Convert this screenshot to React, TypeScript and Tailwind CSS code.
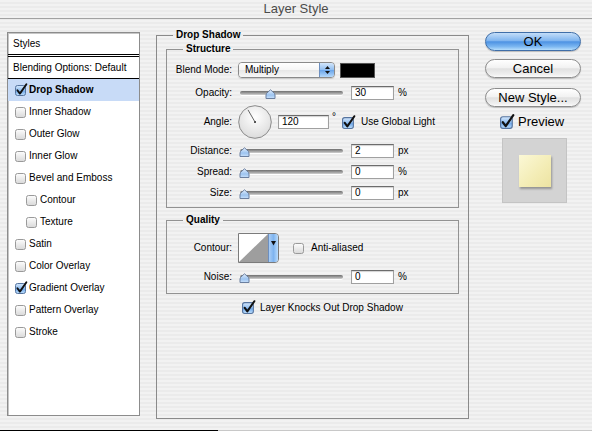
import { useId } from 'react';
import type { ReactNode } from 'react';

const pinstripe =
    'bg-[repeating-linear-gradient(to_bottom,#f2f2f2_0px,#f2f2f2_2px,#ebebeb_2px,#ebebeb_4px)]';

type StyleItem = {
    label: string;
    checked?: boolean;
    active?: boolean;
    nested?: boolean;
};

const styleItems: StyleItem[] = [
    { label: 'Drop Shadow', checked: true, active: true },
    { label: 'Inner Shadow' },
    { label: 'Outer Glow' },
    { label: 'Inner Glow' },
    { label: 'Bevel and Emboss' },
    { label: 'Contour', nested: true },
    { label: 'Texture', nested: true },
    { label: 'Satin' },
    { label: 'Color Overlay' },
    { label: 'Gradient Overlay', checked: true },
    { label: 'Pattern Overlay' },
    { label: 'Stroke' },
];

function useSvgId(suffix: string) {
    return useId().replace(/[^a-zA-Z0-9]/g, '') + suffix;
}

function AquaCheck({
    checked = false,
    size = 11,
}: {
    checked?: boolean;
    size?: number;
}) {
    const fillId = useSvgId('fill');
    return (
        <svg
            width={size + 1}
            height={size + 1}
            viewBox="0 0 12 12"
            className="shrink-0 overflow-visible"
        >
            <defs>
                <linearGradient id={fillId} x1="0" y1="0" x2="0" y2="1">
                    {checked ? (
                        <>
                            <stop offset="0" stopColor="#d6e8fc" />
                            <stop offset="0.5" stopColor="#8fbdf0" />
                            <stop offset="0.55" stopColor="#6fa8ea" />
                            <stop offset="1" stopColor="#bfe0fd" />
                        </>
                    ) : (
                        <>
                            <stop offset="0" stopColor="#fdfdfd" />
                            <stop offset="1" stopColor="#d9d9d9" />
                        </>
                    )}
                </linearGradient>
            </defs>
            <rect
                x="0.5"
                y="1.5"
                width="10"
                height="10"
                rx="2"
                fill={`url(#${fillId})`}
                stroke={checked ? '#56749f' : '#9a9a9a'}
            />
            {checked && (
                <path
                    d="M2.4 6.2 L4.9 9.6 L11.4 0.2"
                    fill="none"
                    stroke="#111"
                    strokeWidth="1.9"
                    strokeLinecap="round"
                    strokeLinejoin="round"
                />
            )}
        </svg>
    );
}

function StylesList() {
    return (
        <div className="mt-[13px] ml-[7px] h-[384px] w-[133px] shrink-0 border border-[#8c8c8c] bg-white shadow-[inset_1px_1px_0_#c6c6c6]">
            <div className="flex h-[21px] items-center pl-[5px]">Styles</div>
            <div className="h-[3px] border-y border-black" />
            <div className="flex h-[22px] items-center border-b border-black pl-[5px]">
                Blending Options: Default
            </div>
            {styleItems.map((item) => (
                <div
                    key={item.label}
                    className={`flex h-[22px] items-center gap-[2px] ${item.nested ? 'pl-[18px]' : 'pl-[7px]'} ${item.active ? 'bg-[#c8dbf7] font-bold' : ''}`}
                >
                    <AquaCheck checked={item.checked} />
                    <span>{item.label}</span>
                </div>
            ))}
        </div>
    );
}

function Label({ children }: { children: ReactNode }) {
    return (
        <span className="w-[66px] shrink-0 pr-[1px] text-right">{children}</span>
    );
}

function NumField({ value, className = 'w-[43px]' }: { value: string; className?: string }) {
    return (
        <div
            className={`flex h-[14px] items-center border border-[#a0a0a0] border-t-[#6c6c6c] bg-white pl-[3px] shadow-[inset_0_1px_1px_rgba(0,0,0,0.18)] ${className}`}
        >
            {value}
        </div>
    );
}

function SliderKnob() {
    const id = useSvgId('knob');
    return (
        <svg width="11" height="10" viewBox="0 0 11 10">
            <defs>
                <linearGradient id={id} x1="0" y1="0" x2="0" y2="1">
                    <stop offset="0" stopColor="#e4effc" />
                    <stop offset="0.6" stopColor="#9cc3ef" />
                    <stop offset="1" stopColor="#c9e1fb" />
                </linearGradient>
            </defs>
            <path
                d="M1 9.5 V6 Q1 4.5 3 3 L5.5 0.8 L8 3 Q10 4.5 10 6 V9.5 Z"
                fill={`url(#${id})`}
                stroke="#6b7f9f"
            />
        </svg>
    );
}

// position is 0..100 along the groove, independent of the field's unit
function Slider({ position }: { position: number }) {
    const knobCenter = 4 + (position / 100) * 88;
    return (
        <div className="relative flex h-[14px] w-[105px] shrink-0 items-center pl-[2px]">
            <div className="h-[4px] w-full rounded-full bg-[linear-gradient(to_bottom,#6f6f6f,#a5a5a5_60%,#d2d2d2)] shadow-[0_1px_0_#ffffff]" />
            <div
                className="absolute top-[3px] h-[10px] w-[11px]"
                style={{ left: 2 + knobCenter - 5.5 }}
            >
                <SliderKnob />
            </div>
        </div>
    );
}

function SliderRow({
    label,
    value,
    position,
    unit,
    className,
}: {
    label: string;
    value: number;
    position: number;
    unit: string;
    className: string;
}) {
    return (
        <div className={`flex h-[14px] items-center ${className}`}>
            <Label>{label}</Label>
            <div className="ml-[5px]">
                <Slider position={position} />
            </div>
            <div className="ml-[8px]">
                <NumField value={String(value)} />
            </div>
            <span className="ml-[4px]">{unit}</span>
        </div>
    );
}

function PopupMenu({ value }: { value: string }) {
    return (
        <div className="flex h-[16px] w-[97px] overflow-hidden rounded-[4px] border border-[#8a8a8a] shadow-[0_1px_1px_rgba(0,0,0,0.15)]">
            <div className="flex flex-1 items-center bg-[linear-gradient(to_bottom,#ffffff,#f5f5f5_50%,#e7e7e7_52%,#f7f7f7)] pl-[6px]">
                {value}
            </div>
            <div className="flex w-[15px] flex-col items-center justify-center gap-[2px] border-l border-[#6d8fbf] bg-[linear-gradient(to_bottom,#d3e6fb,#8fbdf0_50%,#6aa5ea_52%,#b6d9fb)]">
                <svg width="5" height="3" viewBox="0 0 5 3">
                    <path d="M0 3 L2.5 0 L5 3 Z" fill="#111" />
                </svg>
                <svg width="5" height="3" viewBox="0 0 5 3">
                    <path d="M0 0 L2.5 3 L5 0 Z" fill="#111" />
                </svg>
            </div>
        </div>
    );
}

function AngleDial({ angle }: { angle: number }) {
    const id = useSvgId('dial');
    const rad = (angle * Math.PI) / 180;
    const c = 17;
    const len = 14;
    return (
        <svg width="34" height="34" viewBox="0 0 34 34" className="shrink-0">
            <defs>
                <radialGradient id={id} cx="0.5" cy="0.35" r="0.7">
                    <stop offset="0" stopColor="#ffffff" />
                    <stop offset="1" stopColor="#d9d9d9" />
                </radialGradient>
            </defs>
            <circle cx={c} cy={c} r="16.3" fill={`url(#${id})`} stroke="#8a8a8a" />
            <line
                x1={c}
                y1={c}
                x2={c + Math.cos(rad) * len}
                y2={c - Math.sin(rad) * len}
                stroke="#555"
                strokeWidth="0.9"
            />
            <rect x={c - 1} y={c - 1} width="2" height="2" fill="#555" />
        </svg>
    );
}

function ContourSwatch() {
    return (
        <div className="flex h-[30px] w-[41px] overflow-hidden rounded-r-[4px] border border-[#7b7b7b]">
            <svg width="29" height="28" viewBox="0 0 29 28" className="shrink-0">
                <rect width="29" height="28" fill="#ffffff" />
                <path d="M0 28 L29 0 L29 28 Z" fill="#9e9e9e" />
            </svg>
            <div className="flex flex-1 justify-center border-l border-[#6d8fbf] bg-[linear-gradient(to_right,#a9cdf6,#7fb4ef_50%,#b9dbfc)] pt-[7px]">
                <svg width="5" height="5" viewBox="0 0 5 5">
                    <path d="M0 0 L5 0 L2.5 4.5 Z" fill="#111" />
                </svg>
            </div>
        </div>
    );
}

function DropShadowPanel() {
    return (
        <fieldset className="mt-[10px] ml-[16px] h-[390px] w-[313px] shrink-0 border border-[#8a8a8a]">
            <legend className="ml-[16px] px-[3px] leading-[12px] font-bold">
                Drop Shadow
            </legend>

            <fieldset className="mt-[2px] ml-[9px] h-[165px] w-[293px] border border-[#929292]">
                <legend className="ml-[16px] px-[3px] leading-[12px] font-bold">
                    Structure
                </legend>

                <div className="mt-[7px] flex h-[16px] items-center">
                    <Label>Blend Mode:</Label>
                    <div className="ml-[5px]">
                        <PopupMenu value="Multiply" />
                    </div>
                    <div className="ml-[5px] h-[15px] w-[35px] border border-[#555] bg-black" />
                </div>

                <SliderRow label="Opacity:" value={30} position={30} unit="%" className="mt-[8px]" />

                <div className="mt-[5px] flex h-[34px] items-center">
                    <Label>Angle:</Label>
                    <div className="ml-[5px]">
                        <AngleDial angle={120} />
                    </div>
                    <NumField value="120" className="ml-[6px] w-[51px]" />
                    <span className="mb-[10px] ml-[3px]">°</span>
                    <div className="ml-[6px]">
                        <AquaCheck checked size={12} />
                    </div>
                    <span className="ml-[6px]">Use Global Light</span>
                </div>

                <SliderRow label="Distance:" value={2} position={0} unit="px" className="mt-[5px]" />
                <SliderRow label="Spread:" value={0} position={0} unit="%" className="mt-[7px]" />
                <SliderRow label="Size:" value={0} position={0} unit="px" className="mt-[7px]" />
            </fieldset>

            <fieldset className="mt-[6px] ml-[9px] h-[80px] w-[293px] border border-[#929292]">
                <legend className="ml-[16px] px-[3px] leading-[12px] font-bold">
                    Quality
                </legend>

                <div className="mt-[7px] flex h-[30px] items-center">
                    <Label>Contour:</Label>
                    <div className="ml-[5px]">
                        <ContourSwatch />
                    </div>
                    <div className="ml-[14px]">
                        <AquaCheck size={11} />
                    </div>
                    <span className="ml-[6px]">Anti-aliased</span>
                </div>

                <SliderRow label="Noise:" value={0} position={0} unit="%" className="mt-[7px]" />
            </fieldset>

            <div className="mt-[7px] flex h-[13px] items-center pl-[85px]">
                <AquaCheck checked size={12} />
                <span className="ml-[5px]">Layer Knocks Out Drop Shadow</span>
            </div>
        </fieldset>
    );
}

function AquaButton({ label, primary = false, className }: { label: string; primary?: boolean; className: string }) {
    return (
        <div
            className={`flex h-[19px] w-[96px] items-center justify-center rounded-full border text-[13px] leading-none shadow-[0_1px_1px_rgba(0,0,0,0.2)] ${
                primary
                    ? 'border-[#3f6ea8] bg-[linear-gradient(to_bottom,#c3ddf8,#80b5ef_45%,#4d92e3_52%,#7cb7f1_80%,#b6defc)]'
                    : 'border-[#8c8c8c] bg-[linear-gradient(to_bottom,#ffffff,#f2f2f2_45%,#e1e1e1_52%,#efefef_85%,#fbfbfb)]'
            } ${className}`}
        >
            {label}
        </div>
    );
}

function Actions() {
    return (
        <div className="mt-[13px] ml-[16px] flex w-[96px] flex-col">
            <AquaButton label="OK" primary className="" />
            <AquaButton label="Cancel" className="mt-[8px]" />
            <AquaButton label="New Style..." className="mt-[10px]" />
            <div className="mt-[8px] ml-[15px] flex h-[13px] items-center">
                <AquaCheck checked size={13} />
                <span className="ml-[4px] text-[13px]">Preview</span>
            </div>
            <div className="mt-[10px] ml-[17px] flex h-[65px] w-[65px] items-center justify-center border border-[#c4c4c4] bg-[#d3d3d3]">
                <div className="h-[32px] w-[32px] bg-[linear-gradient(135deg,#fbf8d6,#f3ecb4_60%,#ece3a2)] shadow-[1px_2px_2px_rgba(0,0,0,0.3)]" />
            </div>
        </div>
    );
}

export default function App() {
    return (
        <div
            className={`flex h-[431px] w-[592px] flex-col overflow-hidden font-['Liberation_Sans',Arial,sans-serif] text-[10px] leading-[12px] text-black ${pinstripe}`}
        >
            <header className="h-[19px] shrink-0 border-b border-[#a2a2a2] text-center text-[13px] leading-[18px] text-[#4b4b4b]">
                Layer Style
            </header>
            <div className="flex flex-1 items-start">
                <StylesList />
                <DropShadowPanel />
                <Actions />
            </div>
            <div className="flex h-px shrink-0">
                <div className="w-[218px] bg-black" />
                <div className="flex-1 bg-[#c8c8c8]" />
            </div>
        </div>
    );
}
